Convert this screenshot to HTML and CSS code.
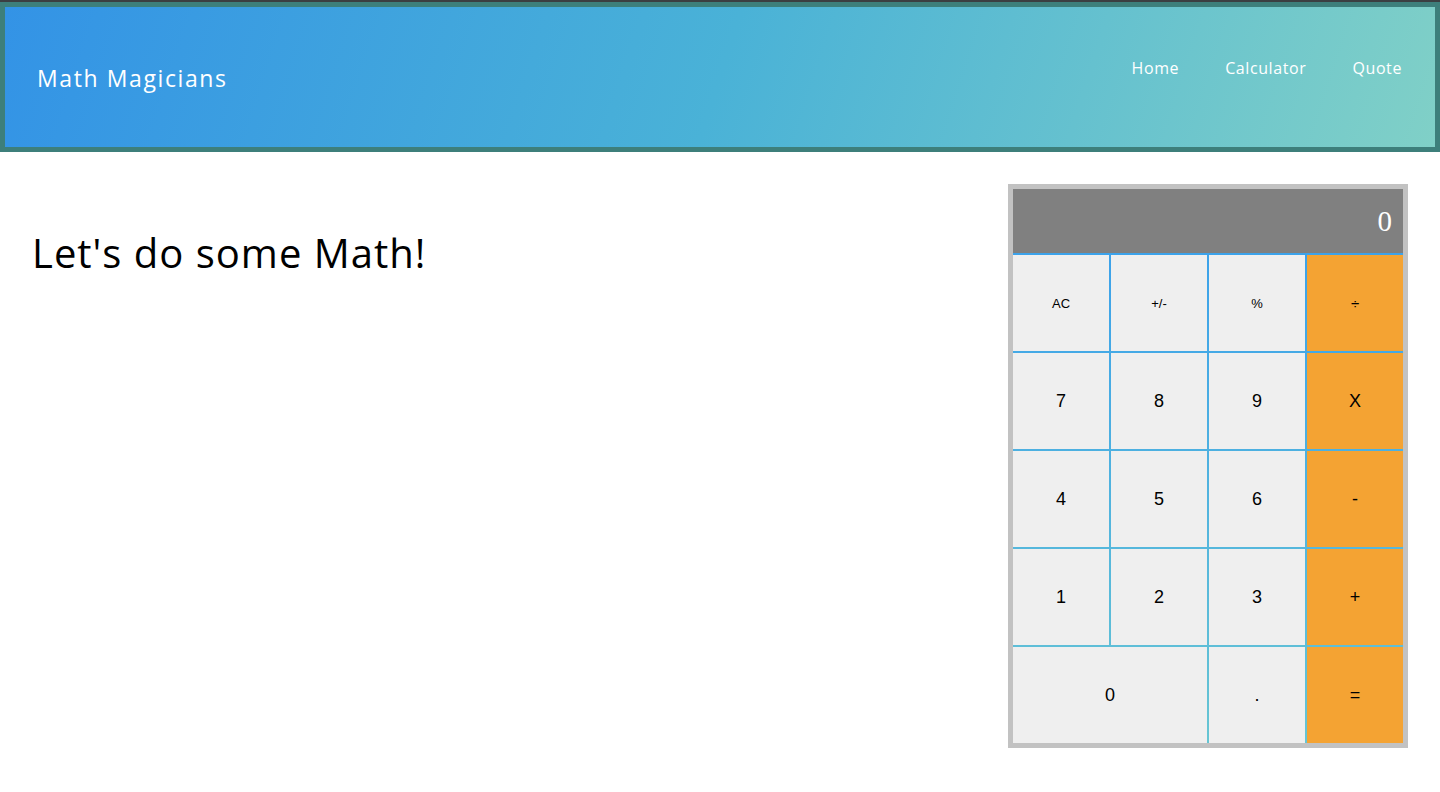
FILE: index.html
```html
<!DOCTYPE html>
<html lang="en">
<head>
<meta charset="utf-8">
<title>Math Magicians</title>
<link rel="stylesheet" href="styles.css">
</head>
<body>
<div class="topstrip"></div>
<header class="header">
  <h1 class="brand">Math Magicians</h1>
  <nav class="nav">
    <a class="nav-link" href="#">Home</a>
    <a class="nav-link" href="#">Calculator</a>
    <a class="nav-link" href="#">Quote</a>
  </nav>
</header>
<main class="main">
  <h2 class="title">Let's do some Math!</h2>
  <div class="calc">
    <div class="display">0</div>
    <div class="keys">
      <button class="key small">AC</button>
      <button class="key small">+/-</button>
      <button class="key small">%</button>
      <button class="key op div">÷</button>
      <button class="key">7</button>
      <button class="key">8</button>
      <button class="key">9</button>
      <button class="key op">X</button>
      <button class="key">4</button>
      <button class="key">5</button>
      <button class="key">6</button>
      <button class="key op">-</button>
      <button class="key">1</button>
      <button class="key">2</button>
      <button class="key">3</button>
      <button class="key op">+</button>
      <button class="key wide">0</button>
      <button class="key">.</button>
      <button class="key op">=</button>
    </div>
  </div>
</main>
</body>
</html>
```
FILE: styles.css
```css
* { box-sizing: border-box; }
html, body { margin: 0; padding: 0; background: #fff; }
body { font-family: "Open Sans", "Noto Sans", sans-serif; color: #000; }

.topstrip { height: 2px; background: #3b3f42; }

.header {
  height: 150px;
  border: 5px solid #3d7f7b;
  background: linear-gradient(108deg, #3393e6 0%, #4ab2d7 50%, #80d0c7 100%);
  display: flex;
  align-items: center;
  justify-content: space-between;
  padding: 0 33px 0 32px;
  color: #fff;
}
.brand {
  margin: 0;
  font-size: 23px;
  font-weight: 500;
  letter-spacing: 1.6px;
  padding-top: 2px;
}
.nav {
  display: flex;
  gap: 46px;
  padding-bottom: 19px;
}
.nav-link {
  color: #fff;
  text-decoration: none;
  font-size: 16px;
  font-weight: 500;
  letter-spacing: 0.6px;
}

.main {
  display: flex;
  justify-content: space-between;
  align-items: flex-start;
  padding: 32px 32px 0 32px;
}
.title {
  margin: 43px 0 0 0;
  font-size: 40px;
  font-weight: 400;
  letter-spacing: 1px;
  line-height: 52px;
}

.calc {
  width: 400px;
  border: 5px solid #c2c2c2;
  background: #c2c2c2;
}
.display {
  height: 64px;
  background: #808080;
  color: #fff;
  font-family: "Liberation Serif", "Times New Roman", serif;
  font-size: 29px;
  text-align: right;
  padding: 14px 11px 0 0;
  line-height: 36px;
}
.keys {
  display: grid;
  grid-template-columns: repeat(4, 96px);
  grid-auto-rows: 96px;
  gap: 2px;
  padding-top: 2px;
  background: linear-gradient(180deg, #3ca2ea 0%, #66c5d3 100%);
}
.key {
  border: 0;
  margin: 0;
  padding: 0;
  background: #efefef;
  font-family: "Liberation Sans", Arial, sans-serif;
  font-size: 18px;
  color: #000;
}
.key.small { font-size: 13px; }
.key.div { font-size: 15px; }
.key.op { background: #f4a333; }
.key.wide { grid-column: span 2; }
```
